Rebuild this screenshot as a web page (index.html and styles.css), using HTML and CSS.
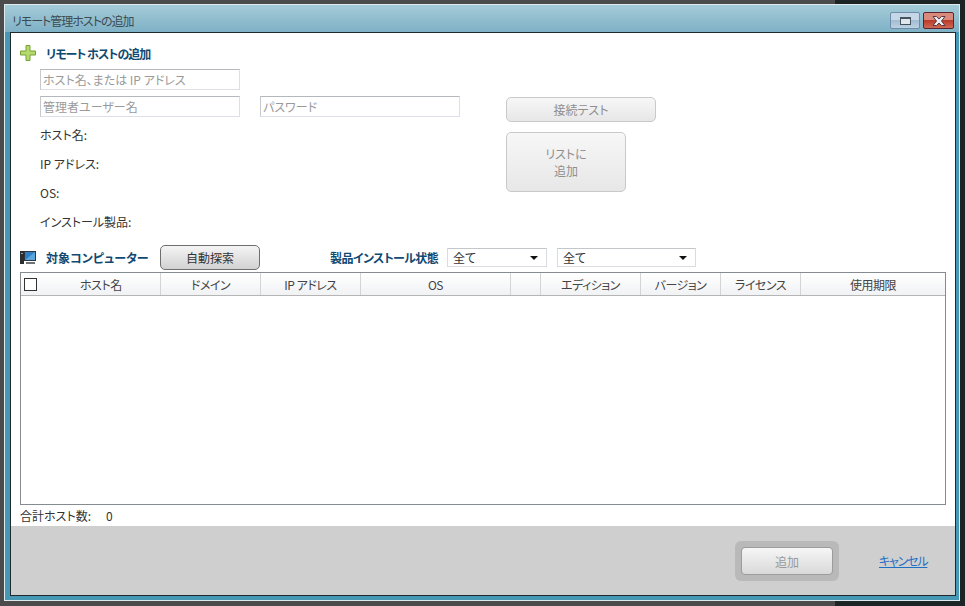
FILE: index.html
```html
<!DOCTYPE html>
<html lang="ja">

<head>
    <meta charset="UTF-8">
    <title>リモート管理ホストの追加</title>
    <link rel="stylesheet" href="styles.css">
</head>

<body>
    <div class="ventana">
        <header class="titulo">
            <span class="titulo-texto">リモート管理ホストの追加</span>
            <div class="controles">
                <button class="ctl ctl-rest" type="button"><span class="ctl-icono"></span></button>
                <button class="ctl ctl-cerrar" type="button">
                    <svg width="14" height="10" viewBox="0 0 14 10">
                        <path d="M1 .5h3.500L7 3l2.500-2.500H13L9.500 5 13 9.500H9.500L7 7 4.500 9.500H1L4.500 5z" fill="#e8edf2" stroke="#5a3a40"/>
                    </svg>
                </button>
            </div>
        </header>

        <main class="contenido">
            <h2 class="seccion seccion-alta">
                <svg width="16" height="16" viewBox="0 0 16 16">
                    <path d="M6 .5h4v5.500h5.500v4H10v5.500H6V10H.5V6H6z" fill="#b5d86f" stroke="#76a334"/>
                </svg>
                <span class="alta-texto">リモート ホストの追加</span>
            </h2>

            <div class="alta">
                <div class="datos">
                    <input class="campo" type="text" placeholder="ホスト名、または IP アドレス">
                    <div class="fila-campos">
                        <input class="campo" type="text" placeholder="管理者ユーザー名">
                        <input class="campo" type="text" placeholder="パスワード">
                    </div>
                    <ul class="info">
                        <li>ホスト名:</li>
                        <li>IP アドレス:</li>
                        <li>OS:</li>
                        <li>インストール製品:</li>
                    </ul>
                </div>
                <div class="acciones">
                    <button class="btn btn-off btn-test" type="button">接続テスト</button>
                    <button class="btn btn-off btn-lista" type="button">リストに<br>追加</button>
                </div>
            </div>

            <div class="barra">
                <h2 class="seccion seccion-equipos">
                    <svg width="16" height="15" viewBox="0 0 16 15">
                        <rect x="0" y="1" width="4" height="13" fill="#2b2f33"/>
                        <rect x="1" y="3" width="2" height="1" fill="#9aa3a8"/>
                        <rect x="4" y="1" width="12" height="10" fill="#30363b"/>
                        <rect x="5" y="2" width="10" height="8" fill="#2f7fc4"/>
                        <path d="M5 10l10-8v8z" fill="#5aa5dd"/>
                        <rect x="6" y="12" width="9" height="2" fill="#6d7377"/>
                    </svg>
                    <span>対象コンピューター</span>
                </h2>
                <button class="btn btn-auto" type="button">自動探索</button>
                <span class="estado">製品インストール状態</span>
                <div class="select select-a"><span>全て</span><i class="flecha"></i></div>
                <div class="select select-b"><span>全て</span><i class="flecha"></i></div>
            </div>

            <div class="tabla">
                <div class="cabecera">
                    <div class="col col-host"><span class="check"></span><span class="col-texto">ホスト名</span></div>
                    <div class="col">ドメイン</div>
                    <div class="col">IP アドレス</div>
                    <div class="col">OS</div>
                    <div class="col"></div>
                    <div class="col">エディション</div>
                    <div class="col">バージョン</div>
                    <div class="col">ライセンス</div>
                    <div class="col">使用期限</div>
                </div>
            </div>

            <p class="total"><span>合計ホスト数:</span><span class="total-num">0</span></p>
        </main>

        <footer class="pie">
            <div class="halo"><button class="btn-add" type="button">追加</button></div>
            <a class="cancelar" href="#">キャンセル</a>
        </footer>
    </div>
</body>

</html>
```

FILE: styles.css
```css
* {
    box-sizing: border-box;
    font-feature-settings: "palt";
}

html,
body {
    height: 100%;
}

body {
    margin: 0;
    padding: 4px 5px 5px 4px;
    overflow: hidden;
    background: linear-gradient(to right, #4b4b4b 835px, #1c2426 835px);
    font-family: "Noto Sans CJK JP", "Liberation Sans", sans-serif;
    font-size: 12px;
    color: #333;
}

.ventana {
    display: flex;
    flex-direction: column;
    height: 597px;
    padding: 0 3px 4px 5px;
    border: 1px solid #dfeaee;
    background: #4798b4;
}

.titulo {
    display: flex;
    justify-content: space-between;
    align-items: flex-start;
    flex: 0 0 27px;
    margin: 0 -3px 0 -5px;
    padding: 8px 5px 0 7px;
    background: linear-gradient(#a4cbd8, #7fb1c6);
}

.titulo-texto {
    font-size: 12px;
    line-height: 16px;
    letter-spacing: -1px;
    color: #3c4a52;
}

.controles {
    display: flex;
    gap: 3px;
    margin-top: -1px;
}

.ctl {
    display: flex;
    justify-content: center;
    align-items: center;
    height: 17px;
    padding: 0;
    border: 1px solid #6f8cab;
    border-radius: 2px;
}

.ctl-rest {
    width: 30px;
    background: linear-gradient(#c6d8e8 50%, #a3bcd4 50%, #bdd2e3);
}

.ctl-icono {
    width: 11px;
    height: 8px;
    border: 1px solid #46525c;
    border-top-width: 2px;
    background: #dfe7ee;
}

.ctl-cerrar {
    width: 31px;
    border-color: #5a2430;
    background: linear-gradient(#d98a7c 50%, #bb3b2c 50%, #cf6a55);
}

.contenido {
    flex: 0 0 494px;
    padding: 0 9px;
    border: 1px solid #1f2a30;
    border-bottom: 0;
    background: #fff;
}

.seccion {
    display: flex;
    align-items: center;
    margin: 0;
    font-size: 12px;
    font-weight: 700;
    color: #0f4a72;
}

.seccion-alta {
    gap: 10px;
    height: 16px;
    margin-top: 12px;
}

.alta-texto {
    letter-spacing: -1px;
}

.alta {
    display: flex;
    margin-top: 8px;
    padding-left: 20px;
}

.datos {
    width: 466px;
}

.campo {
    display: block;
    width: 200px;
    height: 21px;
    padding: 0 2px;
    border: 1px solid #dcdfe6;
    border-top-color: #b4b8bc;
    border-left-color: #c6cacd;
    outline: 0;
    font-family: inherit;
    font-size: 12px;
    background: #fff;
}

.campo::placeholder {
    color: #9a9a9a;
}

.fila-campos {
    display: flex;
    gap: 20px;
    margin-top: 6px;
}

.info {
    margin: 6px 0 0;
    padding: 0;
    list-style: none;
}

.info li {
    height: 29px;
    line-height: 23px;
    color: #333;
}

.acciones {
    display: flex;
    flex-direction: column;
    align-items: flex-start;
    gap: 10px;
    padding-top: 28px;
}

.btn {
    padding: 0;
    border-radius: 5px;
    font-family: inherit;
    font-size: 12px;
    line-height: 17px;
}

.btn-off {
    border: 1px solid #c9c9c9;
    background: linear-gradient(#f7f7f7, #e7e7e7);
    color: #8f8f8f;
}

.btn-test {
    width: 150px;
    height: 25px;
}

.btn-lista {
    width: 120px;
    height: 60px;
}

.barra {
    display: flex;
    align-items: center;
    height: 25px;
    margin-top: 6px;
}

.seccion-equipos {
    gap: 10px;
    width: 140px;
}

.seccion-equipos span {
    white-space: nowrap;
}

.btn-auto {
    width: 100px;
    height: 25px;
    border: 1px solid #6e6e6e;
    background: linear-gradient(#f4f4f4, #d2d2d2);
    color: #333;
}

.estado {
    width: 117px;
    margin-left: 70px;
    font-weight: 700;
    letter-spacing: -.6px;
    color: #0f4a72;
    white-space: nowrap;
}

.select {
    display: flex;
    justify-content: space-between;
    align-items: center;
    height: 19px;
    padding: 0 8px 0 5px;
    border: 1px solid #d8dce2;
    border-top-color: #c4c7ca;
    color: #333;
}

.select-a {
    width: 100px;
}

.select-b {
    width: 139px;
    margin-left: 10px;
}

.flecha {
    width: 0;
    height: 0;
    border: 4px solid transparent;
    border-top: 4px solid #111;
    border-bottom: 0;
}

.tabla {
    height: 233px;
    margin-top: 2px;
    border: 1px solid #858c90;
}

.cabecera {
    display: grid;
    grid-template-columns: 140px 100px 100px 150px 30px 100px 80px 80px 1fr;
    height: 23px;
    border-bottom: 1px solid #b5b5b5;
    background: linear-gradient(#fff, #f1f2f4);
}

.col {
    display: flex;
    justify-content: center;
    align-items: center;
    border-right: 1px solid #d4d4d4;
    letter-spacing: -.5px;
    color: #444;
}

.col:last-child {
    border-right: 0;
}

.col-host {
    justify-content: flex-start;
    padding-left: 3px;
}

.check {
    width: 13px;
    height: 13px;
    border: 1px solid #333;
    background: #fff;
}

.col-texto {
    margin-left: 43px;
}

.total {
    display: flex;
    margin: 0;
    height: 21px;
    line-height: 22px;
    color: #333;
}

.total span:first-child {
    width: 86px;
}

.pie {
    display: flex;
    justify-content: flex-end;
    align-items: flex-start;
    flex: 1;
    padding: 15px 29px 0 0;
    border: 1px solid #1f2a30;
    border-top: 0;
    background: #cfcfcf;
}

.halo {
    padding: 6px;
    border-radius: 6px;
    background: #b9b9b9;
}

.btn-add {
    display: block;
    width: 92px;
    height: 28px;
    border: 1px solid #9c9c9c;
    border-radius: 4px;
    background: linear-gradient(#f6f6f6, #d9d9d9);
    font-family: inherit;
    font-size: 12px;
    color: #999;
}

.cancelar {
    width: 47px;
    margin: 11px 0 0 40px;
    font-size: 12px;
    line-height: 17px;
    letter-spacing: -1.2px;
    white-space: nowrap;
    color: #1f6fc4;
}
```
